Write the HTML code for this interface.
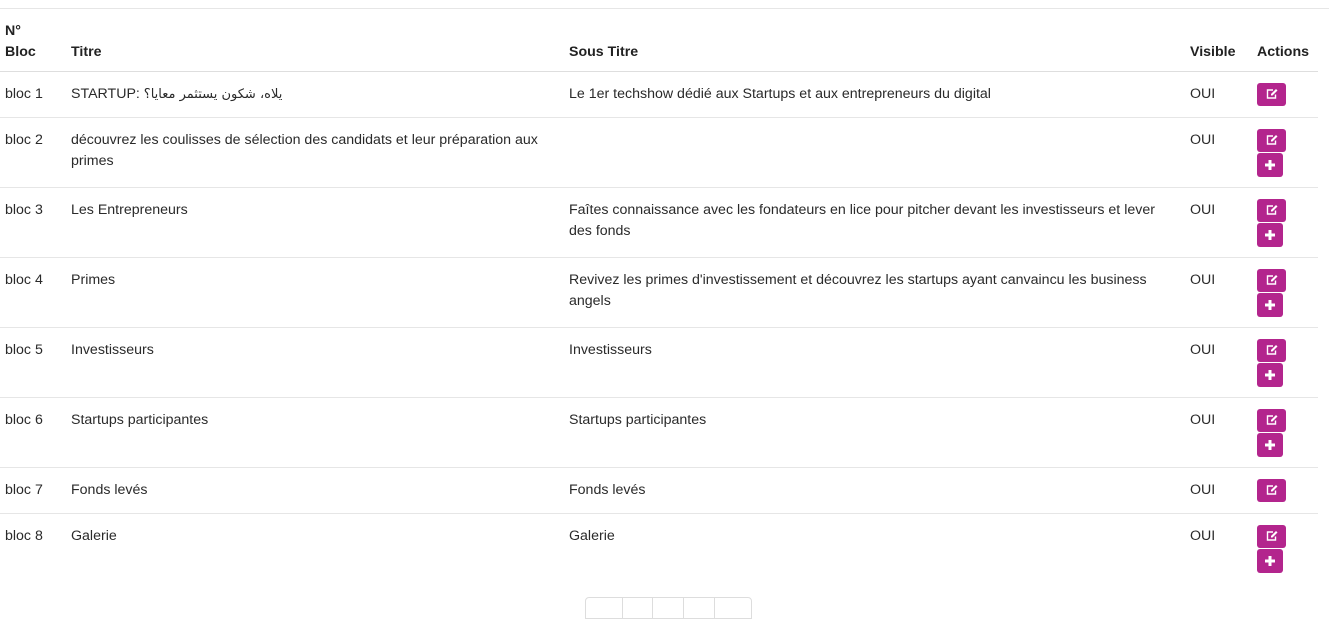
<!DOCTYPE html>
<html><head><meta charset="utf-8"><style>
body{margin:0;background:#fff;font-family:"Liberation Sans","DejaVu Sans",sans-serif;font-size:14.2px;color:#2a2a2a;width:1329px;height:603px;overflow:hidden;position:relative}
.top{position:absolute;left:0;right:0;top:8px;border-top:1px solid #e6e6e6}
table{position:absolute;left:0;top:9px;width:1318px;border-collapse:collapse}
td,th{text-align:left;vertical-align:top;padding:0 5px;line-height:21px}
th{font-weight:bold;vertical-align:bottom;padding-bottom:8px;height:62px;box-sizing:border-box;border-bottom:1px solid #dedede;color:#222}
td{padding-top:12px;border-bottom:1px solid #e6e6e6;box-sizing:border-box}
td.w{padding-right:12px}
tr.s td{height:46px}tr.d td{height:70px}
.b{display:block;background:#b3258d;border-radius:3px;width:29px;height:23px;position:relative;margin-top:1px}
.b.e{margin-top:-1px}
.b.p{width:26px;height:24px;margin-top:1px}
.b svg{position:absolute;left:50%;top:50%;transform:translate(-50%,-50%)}
.pg{position:absolute;left:585px;top:597px;height:20px;display:flex;border:1px solid #ddd;border-radius:4px 4px 0 0}
.pg span{width:36px;border-right:1px solid #ddd}.pg span:last-child{border:0}
</style></head><body>
<div class="top"></div>
<table>
<colgroup><col style="width:66px"><col style="width:498px"><col style="width:621px"><col style="width:67px"><col></colgroup>
<tr><th>N°<br>Bloc</th><th>Titre</th><th>Sous Titre</th><th>Visible</th><th>Actions</th></tr>
<tr class="s"><td>bloc 1</td><td>STARTUP: <span style="font-family:'DejaVu Sans',sans-serif;font-size:13px">يلاه، شكون يستثمر معايا؟</span></td><td class="w">Le 1er techshow dédié aux Startups et aux entrepreneurs du digital</td><td>OUI</td><td><i class="b e"></i></td></tr>
<tr class="d"><td>bloc 2</td><td>découvrez les coulisses de sélection des candidats et leur préparation aux primes</td><td class="w"></td><td>OUI</td><td><i class="b e"></i><i class="b p"></i></td></tr>
<tr class="d"><td>bloc 3</td><td>Les Entrepreneurs</td><td class="w">Faîtes connaissance avec les fondateurs en lice pour pitcher devant les investisseurs et lever des fonds</td><td>OUI</td><td><i class="b e"></i><i class="b p"></i></td></tr>
<tr class="d"><td>bloc 4</td><td>Primes</td><td class="w">Revivez les primes d'investissement et découvrez les startups ayant canvaincu les business angels</td><td>OUI</td><td><i class="b e"></i><i class="b p"></i></td></tr>
<tr class="d"><td>bloc 5</td><td>Investisseurs</td><td class="w">Investisseurs</td><td>OUI</td><td><i class="b e"></i><i class="b p"></i></td></tr>
<tr class="d"><td>bloc 6</td><td>Startups participantes</td><td class="w">Startups participantes</td><td>OUI</td><td><i class="b e"></i><i class="b p"></i></td></tr>
<tr class="s"><td>bloc 7</td><td>Fonds levés</td><td class="w">Fonds levés</td><td>OUI</td><td><i class="b e"></i></td></tr>
<tr class="d"><td style="border:0">bloc 8</td><td style="border:0">Galerie</td><td class="w" style="border:0">Galerie</td><td style="border:0">OUI</td><td style="border:0"><i class="b e"></i><i class="b p"></i></td></tr>
</table>
<div class="pg"><span></span><span style="width:29px"></span><span style="width:30px"></span><span style="width:30px"></span><span></span></div>
<script>
document.querySelectorAll('.b.e').forEach(e=>e.innerHTML='<svg width="12" height="11" viewBox="0 0 12 11"><path d="M7 1.5H1.5v8h8V6" fill="none" stroke="#fff" stroke-width="1.4"/><path d="M10 0.5l1.5 1.5-5 5H5V5.5z" fill="#fff"/></svg>');
document.querySelectorAll('.b.p').forEach(e=>e.innerHTML='<svg width="10" height="10" viewBox="0 0 10 10"><path d="M3.5 0h3v3.5H10v3H6.5V10h-3V6.5H0v-3h3.5z" fill="#fff"/></svg>');
</script>
</body></html>
